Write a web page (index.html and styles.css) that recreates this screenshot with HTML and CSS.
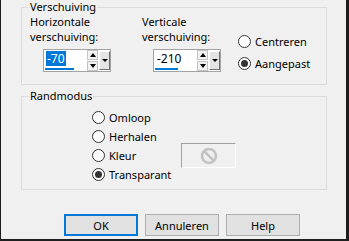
FILE: index.html
```html
<!DOCTYPE html>
<html lang="nl">
<head>
    <meta charset="UTF-8">
    <title>Verschuiving</title>
    <link rel="stylesheet" href="styles.css">
</head>
<body>
    <div class="dialog">
        <fieldset class="group offset-group">
            <legend>Verschuiving</legend>
            <div class="offset-row">
                <div class="field">
                    <div class="field-label">Horizontale<br>verschuiving:</div>
                    <div class="spin spin-h">
                        <div class="spin-value"><span class="selected">-70</span></div>
                        <div class="spin-arrows">
                            <span class="spin-btn"><i class="tri-up"></i></span>
                            <span class="spin-btn"><i class="tri-down"></i></span>
                        </div>
                        <div class="spin-drop"><i class="tri-small"></i></div>
                        <div class="spin-bar" style="width: 29px"></div>
                    </div>
                </div>
                <div class="field">
                    <div class="field-label">Verticale<br>verschuiving:</div>
                    <div class="spin spin-v">
                        <div class="spin-value"><span>-210</span></div>
                        <div class="spin-arrows">
                            <span class="spin-btn"><i class="tri-up"></i></span>
                            <span class="spin-btn"><i class="tri-down"></i></span>
                        </div>
                        <div class="spin-drop"><i class="tri-small"></i></div>
                        <div class="spin-bar" style="width: 23px"></div>
                    </div>
                </div>
                <div class="offset-modes">
                    <div class="radio"><span class="radio-dot"></span>Centreren</div>
                    <div class="radio"><span class="radio-dot checked"></span>Aangepast</div>
                </div>
            </div>
        </fieldset>

        <fieldset class="group mode-group">
            <legend>Randmodus</legend>
            <div class="mode-grid">
                <div class="radio"><span class="radio-dot"></span>Omloop</div>
                <div class="radio"><span class="radio-dot"></span>Herhalen</div>
                <div class="radio"><span class="radio-dot"></span>Kleur</div>
                <div class="radio"><span class="radio-dot checked"></span>Transparant</div>
                <div class="color-box">
                    <svg width="18" height="18" viewBox="0 0 18 18">
                        <circle cx="9" cy="9" r="7" fill="none" stroke="#c3c3c3" stroke-width="2.6"/>
                        <line x1="4.2" y1="4.2" x2="13.8" y2="13.8" stroke="#c3c3c3" stroke-width="2.6"/>
                    </svg>
                </div>
            </div>
        </fieldset>

        <div class="button-row">
            <button class="default">OK</button>
            <button>Annuleren</button>
            <button>Help</button>
        </div>
    </div>
</body>
</html>
```

FILE: styles.css
```css
body {
    margin: 0;
    background-color: #1e1e1e;
    font-family: "Noto Sans", "Open Sans", sans-serif;
    font-size: 11px;
    color: #000;
}
.dialog {
    width: 345px;
    height: 239px;
    margin-left: 1px;
    padding-left: 20px;
    box-sizing: border-box;
    background-color: #f0f0f0;
    overflow: hidden;
}
.group {
    width: 306px;
    min-width: 0;
    margin: 0;
    padding: 0 0 0 8px;
    box-sizing: border-box;
    border: 1px solid #dcdcdc;
}
.group legend {
    padding: 0 1px;
    margin-left: -1px;
    line-height: 14px;
}
.offset-group {
    padding-bottom: 10px;
}
.offset-row {
    display: grid;
    grid-template-columns: 112px 96px auto;
}
.field-label {
    line-height: 15px;
}
.spin {
    position: relative;
    display: flex;
    width: 68px;
    height: 23px;
    margin-top: 5px;
    box-sizing: border-box;
    border: 1px solid #a3a3a3;
    background-color: #fff;
}
.spin-h { margin-left: 13px; }
.spin-v { margin-left: 11px; }
.spin-value {
    flex: 1;
    padding: 1px 0 0 2px;
    font-size: 12px;
    line-height: 15px;
}
.spin-value span {
    display: inline-block;
    padding: 0 1px;
}
.spin-value .selected {
    background-color: #0078d7;
    color: #fff;
}
.spin-bar {
    position: absolute;
    left: 1px;
    bottom: 1px;
    height: 2px;
    background-color: #0078d7;
}
.spin-arrows {
    display: flex;
    flex-direction: column;
    justify-content: center;
    gap: 1px;
    width: 11px;
    margin-right: 1px;
}
.spin-btn {
    display: flex;
    align-items: center;
    justify-content: center;
    height: 8px;
    border: 1px solid #c4c4c4;
    background-color: #f2f2f2;
}
.tri-up, .tri-down, .tri-small {
    width: 0;
    height: 0;
    border-left: 3px solid transparent;
    border-right: 3px solid transparent;
}
.tri-up { border-bottom: 4px solid #000; }
.tri-down { border-top: 4px solid #000; }
.tri-small {
    border-left-width: 3px;
    border-right-width: 3px;
    border-top: 3px solid #000;
}
.spin-drop {
    display: flex;
    align-items: center;
    justify-content: center;
    width: 9px;
    margin: 1px 0;
    border: 1px solid #fff;
    border-right-color: #6f6f6f;
    border-bottom-color: #6f6f6f;
    background-color: #e4e4e4;
}
.offset-modes {
    padding-top: 16px;
}
.radio {
    display: flex;
    align-items: center;
    gap: 4px;
    height: 22px;
    white-space: nowrap;
}
.radio-dot {
    position: relative;
    width: 13px;
    height: 13px;
    box-sizing: border-box;
    border: 1px solid #333;
    border-radius: 50%;
    background-color: #fff;
}
.radio-dot.checked::after {
    content: "";
    position: absolute;
    left: 2px;
    top: 2px;
    width: 7px;
    height: 7px;
    border-radius: 50%;
    background-color: #333;
}
.mode-group {
    margin-top: 4px;
    padding-bottom: 5px;
}
.mode-grid {
    display: grid;
    grid-template-columns: 89px 55px;
    grid-template-rows: 20px 19px 19px 19px;
    padding: 4px 0 0 62px;
}
.mode-grid .radio {
    grid-column: 1;
    height: auto;
}
.color-box {
    grid-column: 2;
    grid-row: 3;
    align-self: center;
    display: flex;
    align-items: center;
    justify-content: center;
    height: 25px;
    box-sizing: border-box;
    border: 1px solid #fff;
    border-top-color: #a0a0a0;
    border-left-color: #a0a0a0;
}
.button-row {
    display: flex;
    gap: 7px;
    margin: 24px 0 0 43px;
}
button {
    width: 74px;
    height: 22px;
    padding: 0;
    border: 1px solid #adadad;
    background-color: #e1e1e1;
    font-family: inherit;
    font-size: 11px;
    color: #000;
}
button.default {
    border: 2px solid #0078d7;
}
```
